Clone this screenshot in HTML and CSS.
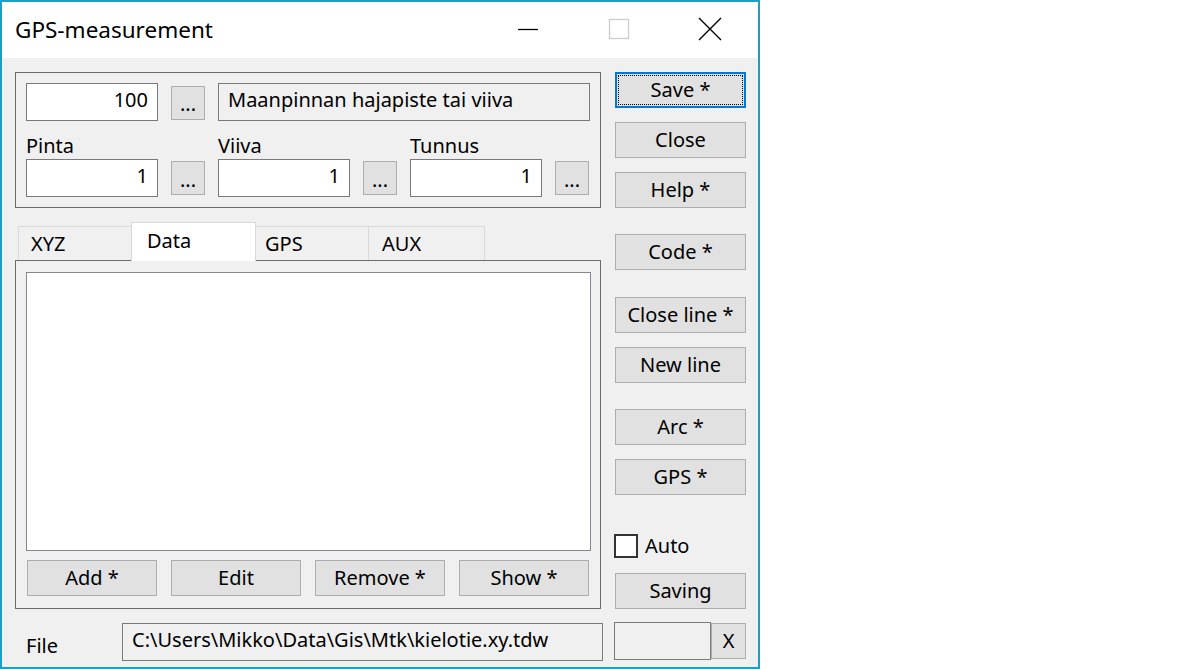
FILE: index.html
```html
<!DOCTYPE html>
<html>
<head>
<meta charset="utf-8">
<link rel="stylesheet" href="styles.css">
</head>
<body>
<div class="window">
  <div class="titlebar">
    <div class="title">GPS-measurement</div>
    <div class="caption">
      <div class="cap-btn"><svg width="22" height="22" viewBox="0 0 22 22"><line x1="1" y1="11.5" x2="21" y2="11.5" stroke="#000" stroke-width="1.3"/></svg></div>
      <div class="cap-btn"><svg width="22" height="22" viewBox="0 0 22 22"><rect x="1.5" y="1.5" width="19" height="19" fill="none" stroke="#cccccc" stroke-width="1.3"/></svg></div>
      <div class="cap-btn"><svg width="26" height="26" viewBox="0 0 26 26"><path d="M2 2 L24 24 M24 2 L2 24" stroke="#000" stroke-width="1.4" fill="none"/></svg></div>
    </div>
  </div>
  <div class="client">
    <div class="left">
      <div class="groupbox">
        <div class="row1">
          <div class="edit num w132">100</div>
          <div class="btn dots">...</div>
          <div class="edit ro desc">Maanpinnan hajapiste tai viiva</div>
        </div>
        <div class="row2">
          <div class="fieldcol">
            <div class="lbl">Pinta</div>
            <div class="pair"><div class="edit num w132">1</div><div class="btn dots">...</div></div>
          </div>
          <div class="fieldcol">
            <div class="lbl">Viiva</div>
            <div class="pair"><div class="edit num w132">1</div><div class="btn dots">...</div></div>
          </div>
          <div class="fieldcol">
            <div class="lbl">Tunnus</div>
            <div class="pair"><div class="edit num w132">1</div><div class="btn dots">...</div></div>
          </div>
        </div>
      </div>
      <div class="tabs">
        <div class="tab t1">XYZ</div>
        <div class="tab active">Data</div>
        <div class="tab t3">GPS</div>
        <div class="tab t4">AUX</div>
      </div>
      <div class="panel">
        <div class="listbox"></div>
        <div class="panel-btns">
          <div class="btn pbtn">Add *</div>
          <div class="btn pbtn">Edit</div>
          <div class="btn pbtn">Remove *</div>
          <div class="btn pbtn">Show *</div>
        </div>
      </div>
      <div class="filerow">
        <div class="filelbl">File</div>
        <div class="edit ro path">C:\Users\Mikko\Data\Gis\Mtk\kielotie.xy.tdw</div>
      </div>
    </div>
    <div class="right">
      <div class="btn side focus"><span class="focusring">Save *</span></div>
      <div class="btn side g14">Close</div>
      <div class="btn side g14">Help *</div>
      <div class="btn side g26">Code *</div>
      <div class="btn side g27">Close line *</div>
      <div class="btn side g14">New line</div>
      <div class="btn side g26">Arc *</div>
      <div class="btn side g14">GPS *</div>
      <div class="check"><span class="box"></span><span>Auto</span></div>
      <div class="btn side saving">Saving</div>
      <div class="bottomrow">
        <div class="edit ro small"></div>
        <div class="btn xbtn">X</div>
      </div>
    </div>
  </div>
</div>
</body>
</html>
```
FILE: styles.css
```css
* { box-sizing: border-box; }
html, body { margin: 0; padding: 0; background: #ffffff; }
body {
  font-family: "Noto Sans", "Open Sans", sans-serif;
  font-size: 20px;
  color: #000;
}
.window {
  width: 760px;
  height: 669px;
  border: 2px solid #1aa0c3;
  background: #f0f0f0;
  display: flex;
  flex-direction: column;
}
.titlebar {
  height: 56px;
  background: #ffffff;
  display: flex;
  align-items: center;
}
.title {
  flex: 1;
  padding-left: 13px;
  font-size: 22.5px;
  padding-bottom: 1px;
}
.caption { display: flex; height: 100%; margin-right: 3px; }
.cap-btn {
  width: 91px;
  height: 100%;
  display: flex;
  align-items: center;
  justify-content: center;
  padding-bottom: 2px;
}
.client {
  flex: 1;
  display: flex;
  padding: 14px 0 0 13px;
}
.left { width: 586px; flex-shrink: 0; }
.right {
  margin-left: 14px;
  width: 131px;
  display: flex;
  flex-direction: column;
}
.groupbox {
  width: 586px;
  height: 136px;
  border: 1px solid #6b6b6b;
  padding: 10px 0 0 10px;
}
.edit {
  height: 38px;
  background: #fff;
  border: 1px solid #7a7a7a;
  display: flex;
  align-items: center;
  padding: 0 9px 5px 9px;
  white-space: nowrap;
  flex-shrink: 0;
}
.edit.num { justify-content: flex-end; }
.edit.ro { background: #f0f0f0; }
.w132 { width: 132px; }
.btn {
  background: #e1e1e1;
  border: 1px solid #adadad;
  display: flex;
  align-items: center;
  justify-content: center;
  padding-bottom: 2px;
  white-space: nowrap;
  flex-shrink: 0;
}
.dots {
  width: 34px;
  height: 34px;
  margin-left: 13px;
  padding-top: 4px;
}
.row1 { display: flex; align-items: center; }
.row1 .dots { margin-top: 1px; }
.desc { width: 372px; margin-left: 13px; }
.row2 { display: flex; margin-top: 16px; }
.fieldcol { width: 192px; flex-shrink: 0; }
.lbl { height: 22px; line-height: 18px; }
.pair { display: flex; align-items: center; }
.tabs {
  display: flex;
  align-items: flex-end;
  height: 52px;
  padding-left: 3px;
  position: relative;
  z-index: 1;
}
.tab {
  height: 34px;
  border: 1px solid #d9d9d9;
  border-bottom: none;
  padding: 3px 0 0 12px;
  width: 114px;
  margin-right: -1px;
  background: #f0f0f0;
  flex-shrink: 0;
}
.tab.t3 { padding-left: 9px; }
.tab.t4 { padding-left: 13px; width: 117px; }
.tab.active {
  height: 39px;
  background: #fff;
  width: 125px;
  padding: 4px 0 0 15px;
  margin-bottom: -1px;
}
.panel {
  width: 586px;
  height: 349px;
  border: 1px solid #6b6b6b;
  padding: 11px 0 0 10px;
}
.listbox {
  width: 565px;
  height: 279px;
  background: #fff;
  border: 1px solid #828790;
}
.panel-btns { display: flex; margin-top: 9px; padding-left: 1px; }
.pbtn { width: 130px; height: 36px; margin-right: 14px; }
.filerow { display: flex; align-items: flex-end; margin-top: 14px; }
.filelbl { width: 107px; flex-shrink: 0; padding-left: 11px; line-height: 26px; padding-bottom: 2px; }
.path { width: 481px; height: 38px; }
.side { width: 131px; height: 36px; }
.g14 { margin-top: 14px; }
.g26 { margin-top: 26px; }
.g27 { margin-top: 27px; }
.focus { border: 2px solid #0078d7; padding: 1px; }
.focusring {
  width: 100%;
  height: 100%;
  border: 1px dotted #000;
  display: flex;
  align-items: center;
  justify-content: center;
  padding-bottom: 2px;
}
.check {
  display: flex;
  align-items: center;
  margin-top: 39px;
  height: 24px;
  margin-left: -1px;
}
.check span:last-child { margin-top: -2px; }
.box {
  width: 24px;
  height: 24px;
  border: 2px solid #333;
  background: #fff;
  margin-right: 7px;
}
.saving { margin-top: 15px; }
.bottomrow { display: flex; margin-top: 13px; margin-left: -1px; }
.small { width: 97px; height: 38px; }
.xbtn { width: 35px; height: 36px; margin-top: 1px; }
```
